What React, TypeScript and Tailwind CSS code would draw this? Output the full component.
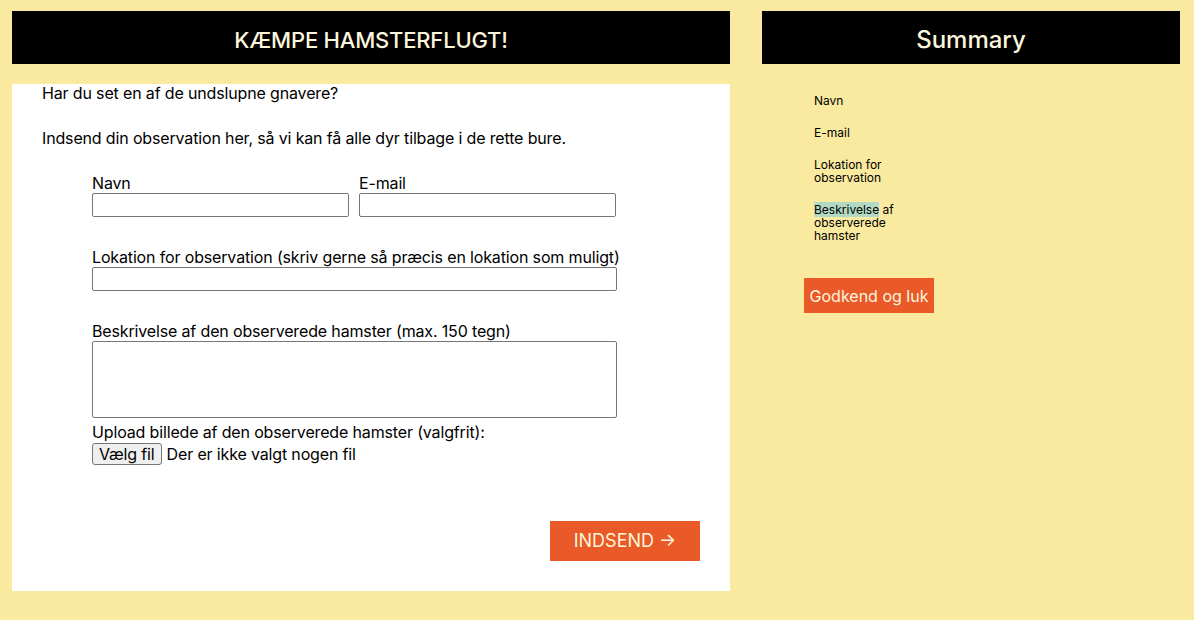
export default function App() {
  const summary = [
    { label: "Navn" },
    { label: "E-mail" },
    { label: "Lokation for observation" },
  ];

  return (
    <div className="min-h-[620px] w-full bg-[#f9ea9f] font-['Inter',sans-serif] text-black">
      <div className="flex gap-[32px] pl-[12px] pt-[11px]">
        {/* Form column */}
        <div className="w-[718px]">
          <h1 className="flex h-[53px] items-center justify-center bg-black pt-[5px] text-[22px] font-medium tracking-[-0.2px] text-[#fdf6dd]">
            KÆMPE HAMSTERFLUGT!
          </h1>

          <div className="mt-[20px] flow-root h-[507px] bg-white pl-[30px] pr-[30px] text-[16px] leading-[20px] tracking-[-0.15px]">
            <p className="-mt-px">Har du set en af de undslupne gnavere?</p>
            <p className="mt-[25px]">
              Indsend din observation her, så vi kan få alle dyr tilbage i de rette bure.
            </p>

            <form className="ml-[50px] mt-[25px] w-[525px]">
              <div className="flex gap-[10px]">
                <label className="flex w-[257px] flex-col">
                  <span>Navn</span>
                  <input className="h-[24px] rounded-[2px] border border-[#767676] px-1" />
                </label>
                <label className="flex w-[257px] flex-col">
                  <span>E-mail</span>
                  <input className="h-[24px] rounded-[2px] border border-[#767676] px-1" />
                </label>
              </div>

              <label className="mt-[30px] flex flex-col">
                <span className="whitespace-nowrap">
                  Lokation for observation (skriv gerne så præcis en lokation som muligt)
                </span>
                <input className="h-[24px] rounded-[2px] border border-[#767676] px-1" />
              </label>

              <label className="mt-[30px] flex flex-col">
                <span>Beskrivelse af den observerede hamster (max. 150 tegn)</span>
                <textarea className="h-[77px] resize-none rounded-[2px] border border-[#767676]" />
              </label>

              <div className="mt-[4px]">
                <span>Upload billede af den observerede hamster (valgfrit):</span>
                <div className="mt-px flex items-center gap-[5px]">
                  <button
                    type="button"
                    className="h-[22px] rounded-[3px] border border-[#767676] bg-[#efefef] px-[6px] text-[16px] leading-[20px]"
                  >
                    Vælg fil
                  </button>
                  <span>Der er ikke valgt nogen fil</span>
                </div>
              </div>

              <div className="mt-[56px] flex justify-end">
                <button
                  type="button"
                  className="-mr-[83px] h-[40px] w-[150px] bg-[#ea5a29] text-[18px] tracking-normal text-[#fdf6dd]"
                >
                  INDSEND →
                </button>
              </div>
            </form>
          </div>
        </div>

        {/* Summary column */}
        <div className="w-[418px]">
          <h2 className="flex h-[53px] items-center justify-center bg-black pt-[5px] text-[24px] font-medium text-[#fdf6dd]">
            Summary
          </h2>

          <div className="pl-[52px] pt-[30px] text-[12px] leading-[13px]">
            {summary.map((s) => (
              <p key={s.label} className="mb-[19px] w-[90px]">
                {s.label}
              </p>
            ))}
            <p className="w-[90px]">
              <span className="bg-[#b2d9c3]">Beskrivelse</span> af observerede hamster
            </p>
          </div>

          <button
            type="button"
            className="ml-[42px] mt-[36px] h-[35px] w-[130px] bg-[#ea5a29] text-[16px] text-[#fdf6dd]"
          >
            Godkend og luk
          </button>
        </div>
      </div>
    </div>
  );
}
